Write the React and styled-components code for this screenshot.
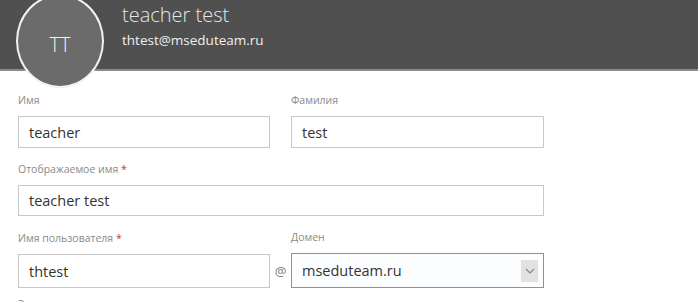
import React from "react";
import styled, { createGlobalStyle } from "styled-components";

const Global = createGlobalStyle`
  html, body { margin: 0; padding: 0; background: #fff; }
  body { font-family: "Open Sans", "Noto Sans", "Liberation Sans", sans-serif; width: 698px; height: 302px; overflow: hidden; }
`;

const Header = styled.header`
  position: relative;
  height: 69px;
  background: #505050;
  border-bottom: 2px solid #8a8a8a;
  display: flex;
  align-items: flex-start;
  padding-left: 122px;
`;

const Avatar = styled.div`
  position: absolute;
  left: 16px;
  top: -6px;
  width: 84px;
  height: 84px;
  border-radius: 50%;
  background: #6b6b6b;
  border: 2px solid #f2f2f2;
  display: flex;
  align-items: center;
  justify-content: center;
  color: #f4f4f4;
  font-size: 20px;
  font-weight: 300;
  padding-top: 6px;
  box-sizing: content-box;
`;

const Identity = styled.div`
  display: flex;
  flex-direction: column;
  padding-top: 2px;
`;

const Name = styled.div`
  color: #e6e6e6;
  font-size: 20px;
  font-weight: 300;
  line-height: 26px;
`;

const Email = styled.div`
  color: #efefef;
  font-size: 13.5px;
  line-height: 20px;
  margin-top: 2px;
`;

const Form = styled.div`
  padding: 22px 0 0 18px;
  display: flex;
  flex-direction: column;
  gap: 14px;
`;

const Row = styled.div`
  display: flex;
  align-items: flex-end;
`;

const Field = styled.div`
  display: flex;
  flex-direction: column;
  width: ${(p) => p.$w}px;
`;

const Label = styled.label`
  font-size: 10.5px;
  color: #8a8a8a;
  line-height: 14px;
  margin-bottom: 9px;
  & > span { color: #b04040; }
`;

const Input = styled.div`
  box-sizing: border-box;
  height: ${(p) => p.$h || 32}px;
  border: 1px solid ${(p) => (p.$focus ? "#6d9bbd" : "#c8c8c8")};
  background: ${(p) => (p.$focus ? "#fbfdff" : "#fff")};
  display: flex;
  align-items: center;
  padding-left: 10px;
  padding-right: 5px;
  font-size: 14.5px;
  color: #333;
`;

const Grow = styled.span`
  flex: 1;
`;

const At = styled.div`
  width: 21px;
  height: 34px;
  display: flex;
  align-items: center;
  justify-content: center;
  color: #777;
  font-size: 13px;
`;

const Arrow = styled.div`
  width: 17px;
  height: 22px;
  background: #e2e2e2;
  display: flex;
  align-items: center;
  justify-content: center;
`;

const Cut = styled.div`
  margin-top: -5px;
  font-size: 10.5px;
  color: #8a8a8a;
  line-height: 14px;
`;

export default function App() {
  return (
    <>
      <Global />
      <Header>
        <Avatar>TT</Avatar>
        <Identity>
          <Name>teacher test</Name>
          <Email>thtest@mseduteam.ru</Email>
        </Identity>
      </Header>
      <Form>
        <Row>
          <Field $w={252}>
            <Label>Имя</Label>
            <Input>teacher</Input>
          </Field>
          <Field $w={21} />
          <Field $w={253}>
            <Label>Фамилия</Label>
            <Input>test</Input>
          </Field>
        </Row>
        <Row>
          <Field $w={526}>
            <Label>
              Отображаемое имя <span>*</span>
            </Label>
            <Input $h={31}>teacher test</Input>
          </Field>
        </Row>
        <Row>
          <Field $w={252}>
            <Label>
              Имя пользователя <span>*</span>
            </Label>
            <Input $h={34}>thtest</Input>
          </Field>
          <At>@</At>
          <Field $w={253}>
            <Label>Домен</Label>
            <Input $h={35} $focus>
              <Grow>mseduteam.ru</Grow>
              <Arrow>
                <svg width="10" height="6" viewBox="0 0 10 6">
                  <path d="M1 1 L5 5 L9 1" fill="none" stroke="#888" strokeWidth="1.2" />
                </svg>
              </Arrow>
            </Input>
          </Field>
        </Row>
        <Cut>Электронная почта</Cut>
      </Form>
    </>
  );
}
